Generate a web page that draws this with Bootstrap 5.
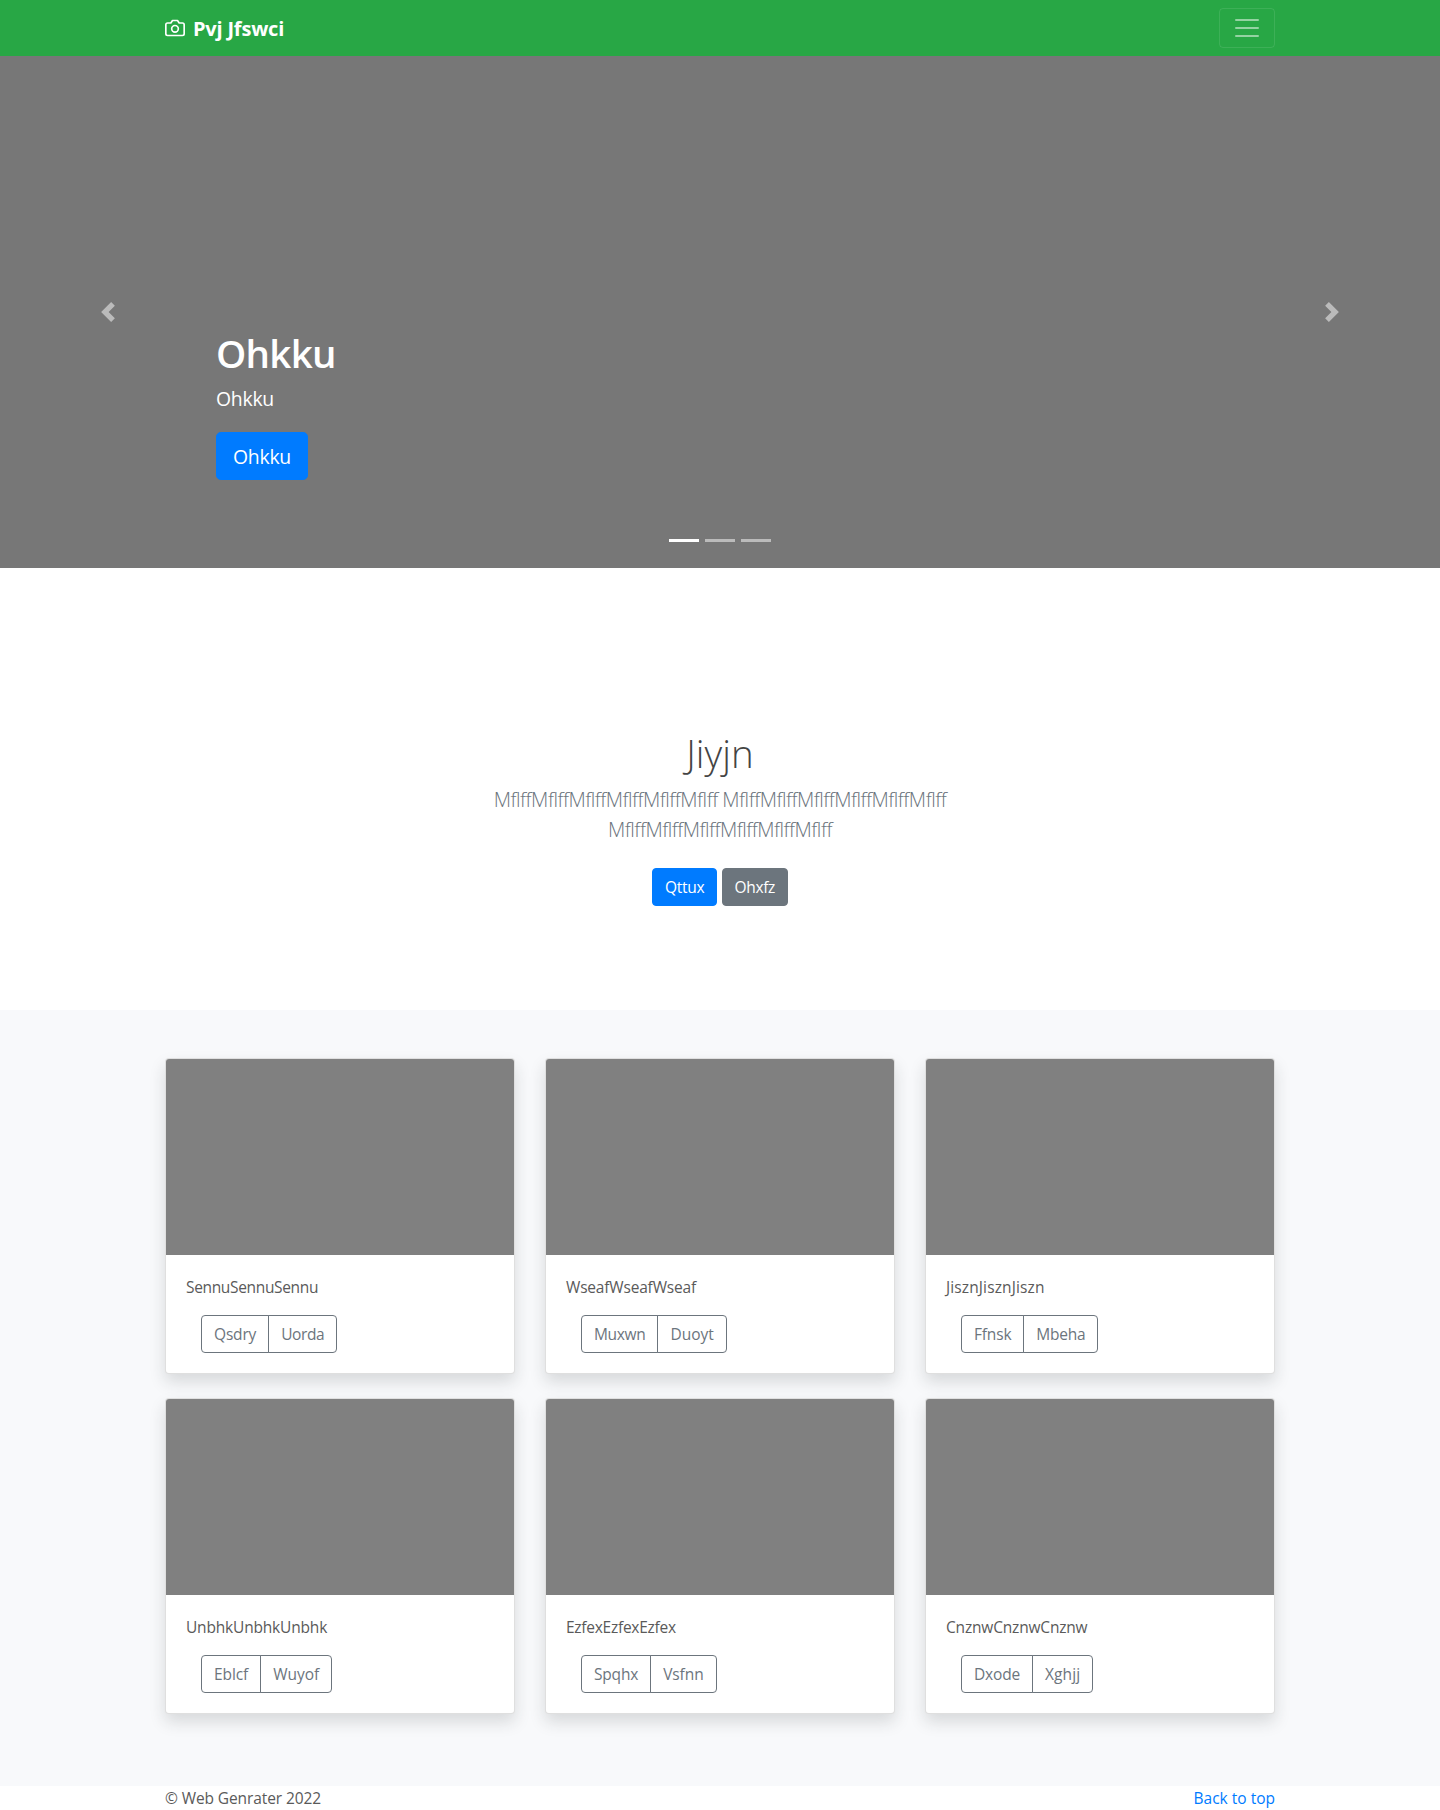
<!DOCTYPE html>
<html lang="en">
<head>
<meta charset="utf-8">
<meta name="viewport" content="width=device-width, initial-scale=1">
<title>Pvj Jfswci</title>
<link href="https://cdn.jsdelivr.net/npm/bootstrap@5.3.0/dist/css/bootstrap.min.css" rel="stylesheet">
<style>
body{font-family:"Open Sans","Noto Sans",sans-serif;font-size:15.5px;line-height:24px;color:#5a5a5a}
.container{max-width:1140px;--bs-gutter-x:30px}
.album .row{--bs-gutter-x:30px}
.site-nav{height:56px;background:#28a745}
.navbar-brand{font-size:20px;font-weight:700;line-height:30px;letter-spacing:-.2px}
.navbar-brand span{padding-top:2px}
.navbar-toggler{border-radius:4px;padding:4px 12px;border-color:rgba(255,255,255,.1)}
.navbar-toggler-icon{width:30px;height:30px;background-image:none;display:block}
.navbar-toggler-icon svg,.navbar-brand svg{display:block}
.hero-slide{height:512px;background:#777}
.carousel-caption{bottom:48px}
.carousel-caption h1{font-size:38.5px;line-height:48px;font-weight:600;letter-spacing:-.7px;margin-bottom:7px}
.carousel-caption p{font-size:19.4px;line-height:30px;margin-bottom:18px;letter-spacing:-.25px}
.carousel-caption p:last-child{margin-bottom:20px}
.carousel-control-prev,.carousel-control-next{opacity:.5}
.carousel-indicators{margin-bottom:16px}
.carousel-indicators [data-bs-target]{background-color:#fff}
.btn{font-size:15.5px;line-height:24px;border-radius:4px}
.btn-lg{width:92px;font-size:19.4px;line-height:30px;padding:9px 0 7px;border-radius:4.8px}
.btn-primary{--bs-btn-bg:#007bff;--bs-btn-border-color:#007bff}
.intro{height:442px;padding-top:161px}
.intro-text{max-width:640px;padding:0 15px}
.intro h1{font-size:38.5px;line-height:48px;font-weight:300;color:#444;margin-bottom:8px}
.intro p.lead{font-size:20px;line-height:30px;letter-spacing:-.5px;margin-bottom:23px;color:#6c757d}
.album{background:#f8f9fb;height:776px;padding:48px 0}
.photo-card{--bs-card-border-color:rgba(0,0,0,.125);--bs-card-border-radius:4px;--bs-card-inner-border-radius:3px;color:#5a5a5a;margin-bottom:24px}
.photo{height:196px;background:#808080;border-radius:3px 3px 0 0}
.photo-card .card-body{padding:20px}
.photo-card .btn-group{margin-left:15px}
.t0{letter-spacing:.12px}.t1{letter-spacing:-.1px}.t2{letter-spacing:-.18px}.t3{letter-spacing:-.26px}.t4{letter-spacing:-.34px}.t5{letter-spacing:-.4px}
a.top-link{color:#007bff}
</style>
</head>
<body>
<header>
<nav class="navbar navbar-dark site-nav p-0">
<div class="container">
<a class="navbar-brand d-flex align-items-center m-0 p-0 text-white" href="#">
<svg class="me-2" width="20" height="20" viewBox="0 0 24 24" fill="none" stroke="#fff" stroke-width="2" stroke-linecap="round" stroke-linejoin="round" aria-hidden="true"><path d="M23 19a2 2 0 0 1-2 2H3a2 2 0 0 1-2-2V8a2 2 0 0 1 2-2h4l2-3h6l2 3h4a2 2 0 0 1 2 2z"/><circle cx="12" cy="13" r="4"/></svg>
<span>Pvj Jfswci</span></a>
<button class="navbar-toggler" type="button" aria-label="Toggle navigation"><span class="navbar-toggler-icon"><svg width="30" height="30" viewBox="0 0 30 30" stroke="rgba(255,255,255,.5)" stroke-width="2" stroke-linecap="round" stroke-miterlimit="10"><path d="M4 7h22M4 15h22M4 23h22"/></svg></span></button>
</div>
</nav>
</header>
<main>
<div id="hero" class="carousel slide">
<div class="carousel-indicators">
<button type="button" data-bs-target="#hero" data-bs-slide-to="0" class="active" aria-label="1"></button>
<button type="button" data-bs-target="#hero" data-bs-slide-to="1" aria-label="2"></button>
<button type="button" data-bs-target="#hero" data-bs-slide-to="2" aria-label="3"></button>
</div>
<div class="carousel-inner">
<div class="carousel-item active hero-slide">
<div class="carousel-caption text-start">
<h1>Ohkku</h1>
<p>Ohkku</p>
<p><a class="btn btn-lg btn-primary d-block" href="#">Ohkku</a></p>
</div>
</div>
</div>
<button class="carousel-control-prev" type="button" data-bs-target="#hero" data-bs-slide="prev" aria-label="Previous"><svg width="20" height="20" viewBox="0 0 8 8" fill="#fff"><path d="M5.25 0l-4 4 4 4 1.5-1.5L4.25 4l2.5-2.5L5.25 0z"/></svg></button>
<button class="carousel-control-next" type="button" data-bs-target="#hero" data-bs-slide="next" aria-label="Next"><svg width="20" height="20" viewBox="0 0 8 8" fill="#fff"><path d="M2.75 0l-1.5 1.5L3.75 4l-2.5 2.5L2.75 8l4-4-4-4z"/></svg></button>
</div>
<section class="intro text-center">
<div class="intro-text mx-auto">
<h1>Jiyjn</h1>
<p class="lead">MflffMflffMflffMflffMflffMflff MflffMflffMflffMflffMflffMflff MflffMflffMflffMflffMflffMflff</p>
<div><a href="#" class="btn btn-primary t3">Qttux</a> <a href="#" class="btn btn-secondary t4">Ohxfz</a></div>
</div>
</section>
<section class="album">
<div class="container">
<div class="row">
<div class="col-4"><div class="card photo-card shadow"><div class="photo"></div><div class="card-body"><p class="card-text mb-3 t4">SennuSennuSennu</p><div class="btn-group"><button type="button" class="btn btn-outline-secondary t2">Qsdry</button><button type="button" class="btn btn-outline-secondary t5">Uorda</button></div></div></div></div>
<div class="col-4"><div class="card photo-card shadow"><div class="photo"></div><div class="card-body"><p class="card-text mb-3 t2">WseafWseafWseaf</p><div class="btn-group"><button type="button" class="btn btn-outline-secondary t4">Muxwn</button><button type="button" class="btn btn-outline-secondary">Duoyt</button></div></div></div></div>
<div class="col-4"><div class="card photo-card shadow"><div class="photo"></div><div class="card-body"><p class="card-text mb-3 t0">JisznJisznJiszn</p><div class="btn-group"><button type="button" class="btn btn-outline-secondary t2">Ffnsk</button><button type="button" class="btn btn-outline-secondary t3">Mbeha</button></div></div></div></div>
<div class="col-4"><div class="card photo-card shadow"><div class="photo"></div><div class="card-body"><p class="card-text mb-3 t2">UnbhkUnbhkUnbhk</p><div class="btn-group"><button type="button" class="btn btn-outline-secondary t1">Eblcf</button><button type="button" class="btn btn-outline-secondary">Wuyof</button></div></div></div></div>
<div class="col-4"><div class="card photo-card shadow"><div class="photo"></div><div class="card-body"><p class="card-text mb-3 t3">EzfexEzfexEzfex</p><div class="btn-group"><button type="button" class="btn btn-outline-secondary t2">Spqhx</button><button type="button" class="btn btn-outline-secondary t1">Vsfnn</button></div></div></div></div>
<div class="col-4"><div class="card photo-card shadow"><div class="photo"></div><div class="card-body"><p class="card-text mb-3 t2">CnznwCnznwCnznw</p><div class="btn-group"><button type="button" class="btn btn-outline-secondary t2">Dxode</button><button type="button" class="btn btn-outline-secondary t0">Xghjj</button></div></div></div></div>
</div>
</div>
</section>
</main>
<footer class="container d-flex justify-content-between">
<span class="t1">© Web Genrater 2022</span>
<a href="#" class="top-link text-decoration-none">Back to top</a>
</footer>
<script src="https://cdn.jsdelivr.net/npm/bootstrap@5.3.0/dist/js/bootstrap.bundle.min.js"></script>
</body>
</html>
